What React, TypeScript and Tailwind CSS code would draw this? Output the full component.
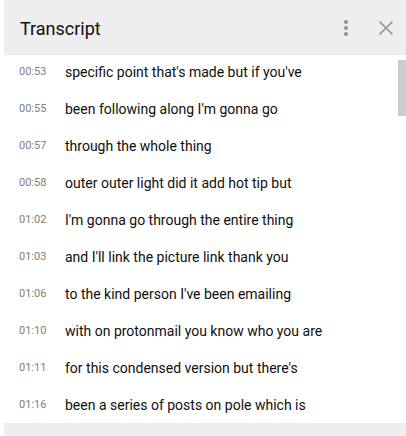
import React from "react";

const rows: [string, string][] = [
  ["00:53", "specific point that's made but if you've"],
  ["00:55", "been following along I'm gonna go"],
  ["00:57", "through the whole thing"],
  ["00:58", "outer outer light did it add hot tip but"],
  ["01:02", "I'm gonna go through the entire thing"],
  ["01:03", "and I'll link the picture link thank you"],
  ["01:06", "to the kind person I've been emailing"],
  ["01:10", "with on protonmail you know who you are"],
  ["01:11", "for this condensed version but there's"],
  ["01:16", "been a series of posts on pole which is"],
];

export default function App() {
  return (
    <div
      className="w-[406px] h-[436px] bg-white pl-[4px] flex flex-col overflow-hidden"
      style={{ fontFamily: "Roboto, 'Liberation Sans', sans-serif" }}
    >
      <div className="h-[55px] bg-[#eeeeee] flex items-center pl-[16px] pr-[12px] shrink-0">
        <div className="text-[18px] text-[#0f0f0f] flex-1 leading-none pt-[3px]">Transcript</div>
        <svg width="6" height="18" viewBox="0 0 6 18" className="mr-[29px]">
          <circle cx="3" cy="3" r="2" fill="#909090" />
          <circle cx="3" cy="9" r="2" fill="#909090" />
          <circle cx="3" cy="15" r="2" fill="#909090" />
        </svg>
        <svg width="16" height="16" viewBox="0 0 16 16">
          <path d="M1.5 1.5 L14.5 14.5 M14.5 1.5 L1.5 14.5" stroke="#909090" strokeWidth="1.6" />
        </svg>
      </div>
      <div className="relative h-[368px] shrink-0 overflow-hidden">
        <div className="absolute right-0 top-[5px] w-[8px] h-[56px] bg-[#cccccc]" />
        {rows.map(([t, s]) => (
          <div key={t} className="h-[37px] flex items-center pb-[2px]">
            <div className="w-[61px] pl-[15px] text-[11px] text-[#808080]">{t}</div>
            <div className="text-[14px] text-[#0f0f0f]">{s}</div>
          </div>
        ))}
      </div>
      <div className="flex-1 bg-[#eeeeee]" />
    </div>
  );
}
